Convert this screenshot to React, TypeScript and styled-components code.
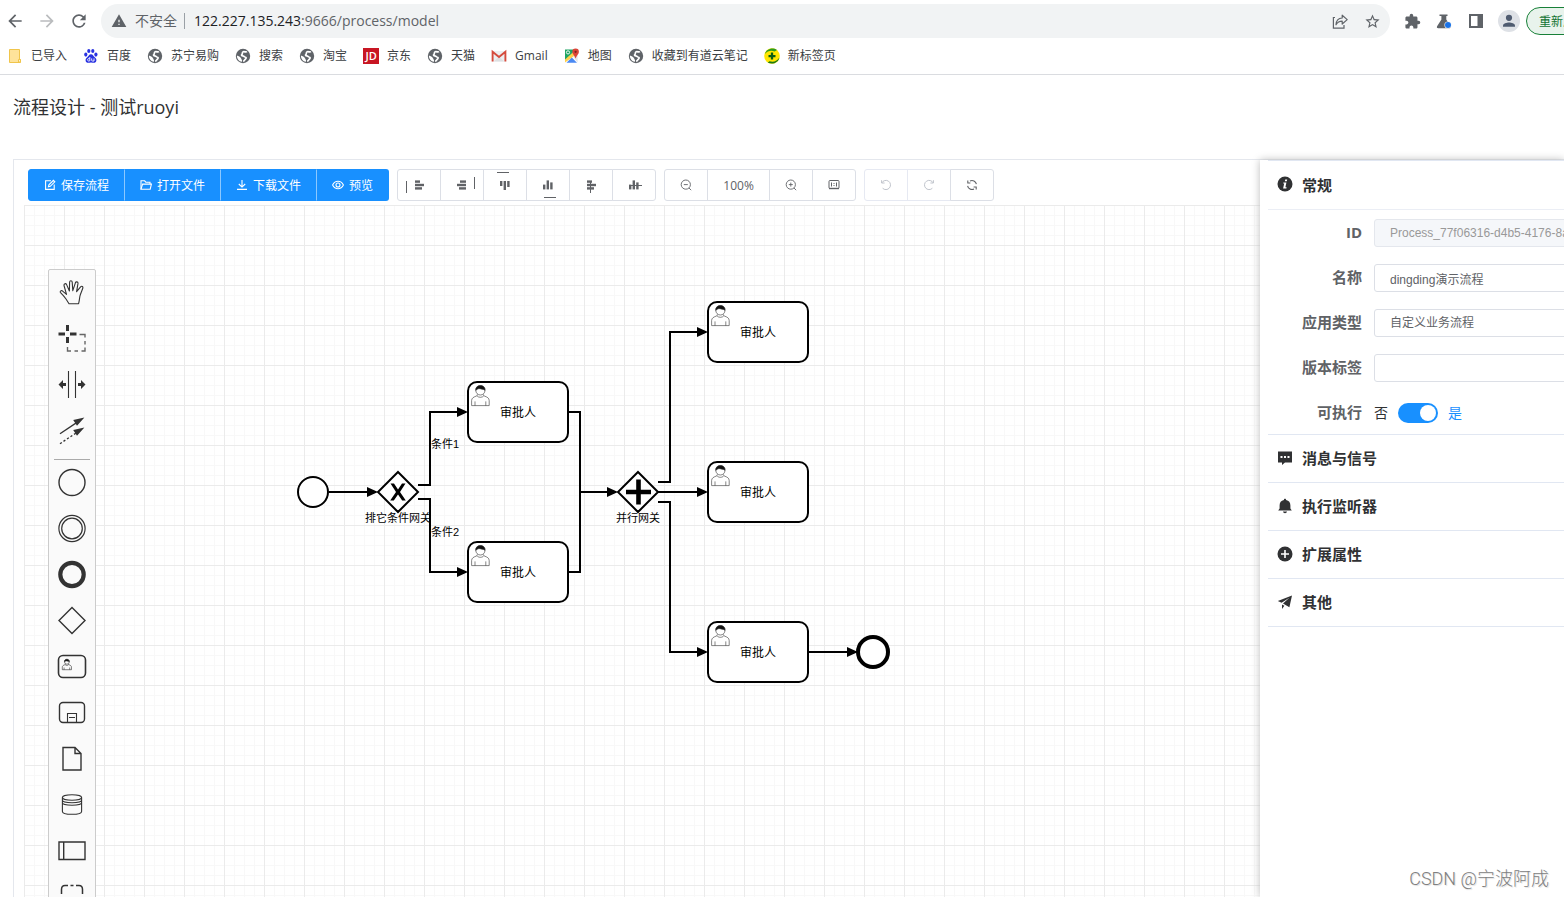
import React, { ReactNode, useState } from 'react';
import styled, { createGlobalStyle } from 'styled-components';
import {
  MdArrowBack,
  MdArrowForward,
  MdRefresh,
  MdWarning,
  MdStarBorder,
  MdExtension,
} from 'react-icons/md';

const uiFont = '"Open Sans", "Noto Sans CJK SC", sans-serif';
const formFont = '"Liberation Sans", "Noto Sans CJK SC", sans-serif';

const color = {
  primary: '#1890ff',
  border: '#dcdfe6',
  borderLight: '#e4e7ed',
  text: '#303133',
  regular: '#606266',
  chrome: '#5f6368',
};

const GlobalStyle = createGlobalStyle`
  * { box-sizing: border-box; }
  body { margin: 0; background: #fff; font-family: ${uiFont}; color: ${color.text}; }
  button, input, select { font-family: inherit; margin: 0; }
  svg { display: block; }
`;

const Page = styled.div`
  display: flex;
  flex-direction: column;
  height: 100vh;
  overflow: hidden;
  position: relative;
`;

/* ---------- browser bar ---------- */

const NavBar = styled.nav`
  display: flex;
  align-items: center;
  gap: 12px;
  height: 42px;
  padding-left: 5px;
  flex: none;
`;

const IconButton = styled.button<{ $faded?: boolean; $small?: boolean }>`
  display: grid;
  place-items: center;
  width: 20px;
  height: 20px;
  padding: 0;
  border: 0;
  background: none;
  color: ${(p) => (p.$faded ? '#babcbe' : color.chrome)};
  font-size: ${(p) => (p.$small ? 17 : 20)}px;
  flex: none;
`;

const AddressBar = styled.div`
  display: flex;
  align-items: center;
  flex: 1;
  min-width: 0;
  height: 34px;
  padding: 0 8px 0 10px;
  border-radius: 17px;
  background: #f1f3f4;
  color: ${color.chrome};
  font-size: 14px;
  line-height: 20px;
`;

const Insecure = styled.span`
  display: flex;
  align-items: center;
  gap: 8px;
  padding-right: 7px;
  border-right: 1px solid #9aa0a6;
  line-height: 16px;
  svg { font-size: 16px; }
`;

const Url = styled.span`
  flex: 1;
  padding-left: 9px;
  b { font-weight: 400; color: #202124; }
`;

const AddressActions = styled.div`
  display: flex;
  gap: 12px;
`;

const Extensions = styled.div`
  display: flex;
  align-items: center;
  gap: 12px;
`;

const Avatar = styled.button`
  width: 22px;
  height: 22px;
  padding: 0;
  border: 0;
  border-radius: 50%;
  background: #dee1e6;
`;

const UpdateSlot = styled.div`
  width: 38px;
  overflow: hidden;
  margin-left: -6px;
`;

const UpdateButton = styled.button`
  height: 28px;
  padding: 0 12px;
  border: 1px solid #188038;
  border-radius: 14px;
  background: #e8f3ec;
  color: #137333;
  font-size: 12px;
  white-space: nowrap;
`;

const Bookmarks = styled.nav`
  display: flex;
  align-items: center;
  gap: 16px;
  height: 33px;
  padding: 0 7px 4px;
  border-bottom: 1px solid #dadce0;
  flex: none;
`;

const Bookmark = styled.a`
  display: flex;
  align-items: center;
  gap: 8px;
  color: #3c4043;
  font-size: 12px;
  line-height: 18px;
  text-decoration: none;
  white-space: nowrap;
`;

const ShareIcon = () => (
  <svg width="20" height="20" viewBox="0 0 20 20" fill="none" stroke={color.chrome} strokeWidth="1.2">
    <path d="M5 6.5H3.4V17.2H14V14" />
    <path d="M6 13.8C6.2 9.6 8.4 7.2 12.2 7V4.2L17.2 8.6L12.2 13V10.2C9.2 10.2 7.4 11.4 6 13.8Z" strokeLinejoin="round" />
  </svg>
);

const FlaskIcon = () => (
  <svg width="20" height="20" viewBox="0 0 20 20">
    <path d="M5.5 3.5H13.5V5H12.3V8.5L16.6 15.2C17.2 16.3 16.6 17.2 15.6 17.2H4.2C3.1 17.2 2.5 16.2 3.1 15.2L7.4 8.5V5H5.5Z" fill={color.chrome} />
    <circle cx="14" cy="14" r="3.6" fill="#f1f3f4" />
    <circle cx="14" cy="14" r="3" fill="#1a73e8" />
  </svg>
);

const SidePanelIcon = () => (
  <svg width="20" height="20" viewBox="0 0 20 20">
    <path fillRule="evenodd" d="M3 3H17V17H3ZM5 5V15H11.5V5Z" fill={color.chrome} />
  </svg>
);

const PersonIcon = () => (
  <svg width="22" height="22" viewBox="0 0 22 22" fill="#4f5b70">
    <circle cx="11" cy="7.8" r="3.1" />
    <path d="M5 16.8V15.4C5 13.4 8.6 12.4 11 12.4S17 13.4 17 15.4V16.8Z" />
  </svg>
);

const FolderIcon = () => (
  <svg width="16" height="16" viewBox="0 0 16 16">
    <path d="M2.5 1.5H12.5V11.5H13.5V14.5H2.5Z" fill="#fee39a" stroke="#f0c54b" />
    <path d="M11.5 14V11.5H13.5V14Z" fill="#fff3cf" stroke="#f0c54b" />
  </svg>
);

const BaiduIcon = () => (
  <svg width="16" height="16" viewBox="0 0 16 16" fill="#2932e1">
    <ellipse cx="2.8" cy="6.6" rx="1.6" ry="2.1" />
    <ellipse cx="5.8" cy="3" rx="1.6" ry="2.1" />
    <ellipse cx="9.8" cy="3" rx="1.6" ry="2.1" />
    <ellipse cx="12.9" cy="6.6" rx="1.6" ry="2.1" />
    <path d="M8 6.2C10 6.2 10.5 8.3 12 9.4C14.4 11.2 13.6 14.8 10.8 14.8C9.8 14.8 9 14.4 8 14.4S6.2 14.8 5.2 14.8C2.4 14.8 1.6 11.2 4 9.4C5.5 8.3 6 6.2 8 6.2Z" />
    <path d="M6.8 9V13M6.6 10.6H5.4C4.4 10.6 4.4 13 5.4 13H6.6M8.7 10.4V12.4Q8.7 13 9.4 13H11V10.4" fill="none" stroke="#fff" strokeWidth="0.9" />
  </svg>
);

const GlobeIcon = () => (
  <svg width="16" height="16" viewBox="0 0 16 16">
    <circle cx="8" cy="8" r="7.2" fill={color.chrome} />
    <path
      d="M12 3.6C10.6 4.6 9.6 3.2 8.2 3.8C6.6 4.6 8 5.8 6.8 6.6C6.2 7 6.6 7.8 7.6 7.8C9 7.8 8.8 8.8 10 9C11.4 9.2 11.4 10.2 10.6 11C9.6 11.6 9.6 12.8 8.2 13.4"
      fill="none"
      stroke="#fff"
      strokeWidth="1.7"
    />
    <path d="M1.9 7.4C3.4 8.2 5.4 8.6 6 10.2C6.4 11.6 7.4 11.8 7 13.7C4 13.4 1.8 10.6 1.9 7.4Z" fill="#fff" />
  </svg>
);

const JdMark = styled.span`
  display: grid;
  place-items: center;
  width: 16px;
  height: 16px;
  background: #c81623;
  color: #fff;
  font-size: 11px;
  font-weight: 600;
  line-height: 16px;
`;

const GmailIcon = () => (
  <svg width="16" height="16" viewBox="0 0 16 16">
    <path d="M1 3H15V13.5H1Z" fill="#eceff1" />
    <path d="M3 13.5L8 8.5L13 13.5Z" fill="#dde0e2" />
    <path d="M1.6 13.5V3.8L8 9L14.4 3.8V13.5" fill="none" stroke="#d54b3d" strokeWidth="1.9" />
  </svg>
);

const MapsIcon = () => (
  <svg width="16" height="16" viewBox="0 0 16 16">
    <path d="M1 1.5H12L1 13Z" fill="#1fa463" />
    <path d="M1 14.5V11.5L11 2.5L13 6Z" fill="#ffd04c" />
    <path d="M2.5 14.8L7.8 9.6L13 14.8Z" fill="#4a89f3" />
    <path d="M9 8.6L13.6 6V14.5Z" fill="#e6e6e6" />
    <circle cx="4" cy="4.4" r="1.6" fill="none" stroke="#fff" strokeWidth="0.9" />
    <path d="M11.6 0.6A3.3 3.3 0 0 1 14.9 4C14.9 6 12.6 7.4 11.6 10.4C10.6 7.4 8.3 6 8.3 4A3.3 3.3 0 0 1 11.6 0.6Z" fill="#db4437" />
    <circle cx="11.6" cy="3.8" r="1.1" fill="#7b231b" />
  </svg>
);

const NewTabIcon = () => (
  <svg width="16" height="16" viewBox="0 0 16 16">
    <circle cx="8" cy="8" r="7.8" fill="#ffe600" />
    <path d="M1 6C2 1.6 8 -1.2 13 2L10.6 3.6C7.4 1.8 3.6 2.8 1 6Z" fill="#2c9a1e" />
    <path d="M15.4 9.4C14.6 14 9 17.4 3.6 14.4L5.6 13.2C9.6 14.6 13.4 12.8 15.4 9.4Z" fill="#1d7a14" />
    <path d="M8 4.6V11.6M4.5 8.1H11.5" stroke="#0b5c12" strokeWidth="2.3" />
  </svg>
);

const bookmarks: { label: string; icon: ReactNode }[] = [
  { label: '已导入', icon: <FolderIcon /> },
  { label: '百度', icon: <BaiduIcon /> },
  { label: '苏宁易购', icon: <GlobeIcon /> },
  { label: '搜索', icon: <GlobeIcon /> },
  { label: '淘宝', icon: <GlobeIcon /> },
  { label: '京东', icon: <JdMark aria-hidden="true">JD</JdMark> },
  { label: '天猫', icon: <GlobeIcon /> },
  { label: 'Gmail', icon: <GmailIcon /> },
  { label: '地图', icon: <MapsIcon /> },
  { label: '收藏到有道云笔记', icon: <GlobeIcon /> },
  { label: '新标签页', icon: <NewTabIcon /> },
];

/* ---------- page frame ---------- */

const Main = styled.main`
  display: flex;
  flex-direction: column;
  flex: 1;
  min-height: 0;
  padding-left: 13px;
`;

const Title = styled.h1`
  margin: 0;
  padding: 20px 0 40px;
  font-size: 18px;
  line-height: 24px;
  font-weight: 400;
  flex: none;
`;

const Designer = styled.div`
  display: flex;
  flex: 1;
  min-height: 0;
  border-top: 1px solid ${color.borderLight};
  border-left: 1px solid ${color.borderLight};
`;

const Workspace = styled.section`
  display: flex;
  flex-direction: column;
  flex: 1;
  min-width: 0;
`;

const Toolbar = styled.div`
  display: flex;
  gap: 8px;
  padding: 9px 14px 4px;
  flex: none;
`;

const ButtonGroup = styled.div`
  display: flex;
  button + button { margin-left: -1px; }
  button:not(:first-child) { border-top-left-radius: 0; border-bottom-left-radius: 0; }
  button:not(:last-child) { border-top-right-radius: 0; border-bottom-right-radius: 0; }
`;

const PrimaryButton = styled.button`
  display: flex;
  align-items: center;
  gap: 5px;
  height: 32px;
  padding: 0 15px;
  border: 1px solid ${color.primary};
  border-radius: 3px;
  background: ${color.primary};
  color: #fff;
  font-size: 12px;
  white-space: nowrap;
  & + & { border-left-color: rgba(255, 255, 255, 0.5); }
`;

const ToolButton = styled.button<{ $wide?: boolean }>`
  display: grid;
  place-items: center;
  width: ${(p) => (p.$wide ? 63 : 44)}px;
  height: 32px;
  padding: 0;
  border: 1px solid ${color.border};
  border-radius: 3px;
  background: #fff;
  color: ${color.regular};
  font-size: 12px;
  &:disabled { color: #c0c4cc; border-color: #e6e9f2; }
`;

const SaveIcon = () => (
  <svg width="12" height="12" viewBox="0 0 12 12" fill="none" stroke="currentColor" strokeWidth="1.1">
    <path d="M7 1.8H1.6V10.4H10.2V5.4" />
    <path d="M4.4 7.8L4.9 5.9L9.4 1.4L10.8 2.8L6.3 7.3Z" />
  </svg>
);
const OpenIcon = () => (
  <svg width="12" height="12" viewBox="0 0 12 12" fill="none" stroke="currentColor" strokeWidth="1.1">
    <path d="M1 10.2V1.8H4.6L5.8 3.2H10V5" />
    <path d="M1 10.2L2.6 5.1H11.4L10.2 10.2Z" />
  </svg>
);
const DownloadIcon = () => (
  <svg width="12" height="12" viewBox="0 0 12 12" fill="none" stroke="currentColor" strokeWidth="1.1">
    <path d="M6 1V8M2.8 5L6 8.1L9.2 5M1 10.4H11" />
  </svg>
);
const ViewIcon = () => (
  <svg width="12" height="12" viewBox="0 0 12 12" fill="none" stroke="currentColor" strokeWidth="1.1">
    <path d="M0.6 6C3 1 9 1 11.4 6C9 11 3 11 0.6 6Z" />
    <circle cx="6" cy="6" r="2" />
  </svg>
);

type Bar = [number, number, number, number];
const rowsLeft: Bar[] = [[17, 10.4, 5, 2.4], [17, 13.8, 9, 2.4], [17, 17.2, 7, 2.4]];
const rowsRight: Bar[] = [[19, 10.4, 6, 2.4], [16, 13.8, 9, 2.4], [18, 17.2, 7, 2.4]];
const colsTop: Bar[] = [[16, 11, 2.4, 5], [19.6, 11, 2.4, 9], [23.2, 11, 2.4, 6]];
const colsBottom: Bar[] = [[16, 14.6, 2.4, 4.8], [19.6, 10.4, 2.4, 9], [23.2, 12.4, 2.4, 7]];

const alignTools: { label: string; bars: Bar[]; line: Bar }[] = [
  { label: '向左对齐', bars: rowsLeft, line: [8, 11, 1, 12] },
  { label: '向右对齐', bars: rowsRight, line: [33, 7, 1, 12] },
  { label: '向上对齐', bars: colsTop, line: [13, 2, 12, 1] },
  { label: '向下对齐', bars: colsBottom, line: [17, 27, 12, 1] },
  { label: '水平居中', bars: rowsLeft, line: [20, 11, 1, 12] },
  { label: '垂直居中', bars: colsBottom, line: [17, 15, 12, 1] },
];

const AlignGlyph = ({ bars, line }: { bars: Bar[]; line: Bar }) => (
  <svg width="42" height="30" viewBox="0 0 42 30" fill="currentColor">
    {[...bars, line].map(([x, y, w, h], i) => (
      <rect key={i} x={x} y={y} width={w} height={h} />
    ))}
  </svg>
);

const ZoomGlyph = ({ plus }: { plus?: boolean }) => (
  <svg width="12" height="12" viewBox="0 0 12 12" fill="none" stroke="currentColor" strokeWidth="0.9">
    <circle cx="5.8" cy="5.6" r="4.6" />
    <path d="M9 9L11.2 11.2M3.8 5.6H7.8" />
    {plus && <path d="M5.8 3.6V7.6" />}
  </svg>
);

const FitGlyph = () => (
  <svg width="12" height="12" viewBox="0 0 12 12" fill="none" stroke="currentColor" strokeWidth="1">
    <rect x="1" y="1.5" width="10" height="8" rx="1" />
    <path d="M1 9.5H11" strokeWidth="1.4" />
    <path d="M3.5 3.5V7.5M8.5 3.5V7.5" />
    <path d="M6 4V5M6 6V7" />
  </svg>
);

const UndoGlyph = () => (
  <svg width="12" height="12" viewBox="0 0 12 12" fill="none" stroke="currentColor" strokeWidth="1">
    <path d="M1.6 1.2V4H4.6M1.8 3.9A4.6 4.6 0 1 1 2.6 9.2" />
  </svg>
);
const RedoGlyph = () => (
  <svg width="12" height="12" viewBox="0 0 12 12" fill="none" stroke="currentColor" strokeWidth="1">
    <path d="M10.4 1.2V4H7.4M10.2 3.9A4.6 4.6 0 1 0 9.4 9.2" />
  </svg>
);
const ResetGlyph = () => (
  <svg width="12" height="12" viewBox="0 0 12 12" fill="none" stroke="currentColor" strokeWidth="1.1">
    <path d="M1.8 1.4V4H4.4M4 2A4.5 4.5 0 0 1 10.4 5.2M10.2 10.6V8H7.6M8 10A4.5 4.5 0 0 1 1.6 6.8" />
  </svg>
);

/* ---------- canvas ---------- */

const Canvas = styled.div`
  position: relative;
  flex: 1;
  min-height: 0;
  margin-left: 10px;
  overflow: hidden;
  background-image:
    linear-gradient(to right, #ebebeb 1px, transparent 1px),
    linear-gradient(to bottom, #ebebeb 1px, transparent 1px),
    linear-gradient(to right, #f8f8f8 1px, transparent 1px),
    linear-gradient(to bottom, #f8f8f8 1px, transparent 1px);
  background-size: 40px 40px, 40px 40px, 10px 10px, 10px 10px;
`;

const Diagram = styled.svg`
  width: 100%;
  height: 100%;
  font-family: ${formFont};
`;

const Palette = styled.div`
  position: absolute;
  left: 24px;
  top: 64px;
  width: 48px;
  border: 1px solid #ccc;
  border-radius: 2px;
  background: #fafafa;
`;

const PaletteEntry = styled.button`
  display: grid;
  place-items: center;
  width: 46px;
  height: 46px;
  padding: 0;
  border: 0;
  background: none;
`;

const PaletteRule = styled.hr`
  margin: 0 5px;
  padding-top: 5px;
  border: 0;
  border-bottom: 1px solid #aaa;
`;

const UserGlyph = ({ line = 0.6 }: { line?: number }) => (
  <g fill="none" stroke="#333" strokeWidth={line}>
    <path d="M6.4 9.4C6.4 10.4 6 10.8 5.2 11.1C2.6 12.1 0.6 13 0.6 15.6V20.6H18.2V15.6C18.2 13 16.2 12.1 13.6 11.1C12.8 10.8 12.4 10.4 12.4 9.4" />
    <path d="M4 20.6V16.4M14.8 20.6V16.4M6 10.8C7.4 12.8 11.4 12.8 12.8 10.8" />
    <circle cx="9.4" cy="5.4" r="4.6" fill="#fff" />
    <path d="M4.8 5.4C4.4 2.4 6.6 0.5 9.4 0.5S14.4 2.4 14 5.4C13 3.9 11.6 4.7 9.8 3.9C8 3.4 6.2 3.6 4.8 5.4Z" fill="#111" />
  </g>
);

const paletteTools: { label: string; art: ReactNode }[] = [
  {
    label: '抓手工具',
    art: (
      <path
        d="M12 25.7L9 21C7 18 5 16 3.3 14.3C2.8 13 4.2 12.2 5.3 12.8L9.5 16.3L7 7.5C6.8 5.6 8.8 5 9.6 6.6L12.4 13L12.6 4C12.8 2.4 15 2.4 15.2 4L15.8 12.6L18.4 4.8C19 3.2 21.2 3.8 21 5.4L19.6 13.6L23.6 8.8C24.8 7.6 26.4 8.8 25.8 10.2L23.4 16.5C22.4 19 22.8 21 21.6 25.7Z"
        strokeWidth="1.1"
        strokeLinejoin="round"
      />
    ),
  },
  {
    label: '框选工具',
    art: (
      <>
        <path d="M1.5 10H8M13 10H19.5M10.5 1V7M10.5 13V19" strokeWidth="3" />
        <path d="M22.5 10.5H28V13.5M28 17V20.5M28 23.5V27H24.5M21 27H17.5M14 27H10.5V23" stroke="#666" strokeWidth="1.4" />
      </>
    ),
  },
  {
    label: '空间工具',
    art: (
      <>
        <path d="M11.5 1V28M18.5 1V28" strokeWidth="1.1" />
        <path d="M1.5 14.5L6 10V13H9V16H6V19ZM28.5 14.5L24 10V13H21V16H24V19Z" fill="#333" stroke="none" />
      </>
    ),
  },
  {
    label: '连线工具',
    art: (
      <>
        <path d="M3 17.7L20 6.4" strokeWidth="1.3" />
        <path d="M3 27.7L20 16.4" strokeWidth="1.3" strokeDasharray="2.2 2" />
        <path d="M27.4 1.6L20 9.8L16.2 3.9ZM27.4 11.6L20 19.8L16.2 13.9Z" fill="#333" stroke="none" />
      </>
    ),
  },
];

const paletteShapes: { label: string; art: ReactNode }[] = [
  { label: '开始事件', art: <circle cx="15" cy="14.5" r="13" /> },
  {
    label: '中间事件',
    art: (
      <>
        <circle cx="15" cy="14.5" r="13.1" strokeWidth="1.2" />
        <circle cx="15" cy="14.5" r="10.3" strokeWidth="1.2" />
      </>
    ),
  },
  { label: '结束事件', art: <circle cx="15" cy="14.5" r="11.7" strokeWidth="4.2" /> },
  { label: '网关', art: <path d="M15 1.6L28 14.5L15 27.4L2 14.5Z" /> },
  {
    label: '用户任务',
    art: (
      <>
        <rect x="1.5" y="3.5" width="27" height="22" rx="4.5" strokeWidth="1.6" />
        <g transform="translate(5 7) scale(0.52)"><UserGlyph line={1.2} /></g>
      </>
    ),
  },
  {
    label: '子流程',
    art: (
      <>
        <rect x="2.5" y="4.5" width="25" height="20" rx="3.5" strokeWidth="1.4" />
        <path d="M10.5 24.5V15.5H19.5V24.5M12 19.5H18" strokeWidth="1.1" />
      </>
    ),
  },
  { label: '数据对象', art: <path d="M6 3.5H18L24 9.5V26H6ZM18 3.5V9.5H24" /> },
  {
    label: '数据存储',
    art: (
      <>
        <ellipse cx="15" cy="7.5" rx="9.6" ry="2.7" strokeWidth="1.1" />
        <path d="M5.4 7.5V21.4C5.4 25.2 24.6 25.2 24.6 21.4V7.5M5.4 10C5.4 13.6 24.6 13.6 24.6 10M5.4 12.6C5.4 16.2 24.6 16.2 24.6 12.6" strokeWidth="1.1" />
      </>
    ),
  },
  { label: '泳池', art: <path d="M2 6H28V23.5H2ZM6.7 6V23.5" strokeWidth="1.4" /> },
  {
    label: '分组',
    art: <path d="M4.5 12V7.5C4.5 5 5.5 3.5 8 3.5H11M13.5 3.5H16.5M19 3.5H22C24.5 3.5 25.5 5 25.5 7.5V12M25.5 15V18M4.5 15V18" strokeWidth="1.5" />,
  },
];

const PaletteIcon = ({ children }: { children: ReactNode }) => (
  <svg width="30" height="30" viewBox="0 0 30 30" fill="none" stroke="#333" strokeWidth="1.4">
    {children}
  </svg>
);

const Task = ({ x, y }: { x: number; y: number }) => (
  <g transform={`translate(${x} ${y})`}>
    <rect width="100" height="60" rx="9" fill="#fff" stroke="#000" strokeWidth="2" />
    <g transform="translate(3 3)"><UserGlyph /></g>
    <text x="50" y="35" fontSize="12" textAnchor="middle">审批人</text>
  </g>
);

const Gateway = ({ x, y, name, children }: { x: number; y: number; name: string; children: ReactNode }) => (
  <g transform={`translate(${x} ${y})`}>
    <path d="M0 -20L20 0L0 20L-20 0Z" fill="#fff" stroke="#000" strokeWidth="2" />
    {children}
    <text y="30" fontSize="11" textAnchor="middle">{name}</text>
  </g>
);

const flows = [
  'M329 492H376',
  'M418 485H430V412H466',
  'M418 499H430V572H466',
  'M580 492H616',
  'M658 482H670V332H706',
  'M658 492H706',
  'M658 502H670V652H706',
  'M808 652H856',
];

const ProcessDiagram = () => (
  <Diagram role="img" aria-label="流程图">
    <defs>
      <marker id="flow-end" viewBox="0 0 11 10" refX="9" refY="5" markerWidth="11" markerHeight="10" markerUnits="userSpaceOnUse" orient="auto">
        <path d="M0 0L11 5L0 10Z" />
      </marker>
    </defs>
    <g transform="translate(-24 -205)">
      <g fill="none" stroke="#000" strokeWidth="2">
        {flows.map((d) => (
          <path key={d} d={d} markerEnd="url(#flow-end)" />
        ))}
        <path d="M568 412H580V572H568" />
      </g>
      <circle cx="313" cy="492" r="15" fill="#fff" stroke="#000" strokeWidth="2" />
      <circle cx="873" cy="652" r="15" fill="#fff" stroke="#000" strokeWidth="4" />
      <Gateway x={398} y={492} name="排它条件网关">
        <path d="M-7.5 -8.5H-4L0 -2.6L4 -8.5H7.5L2 0L7.8 8.5H4.2L0 2.6L-4.2 8.5H-7.8L-2 0Z" />
      </Gateway>
      <Gateway x={638} y={492} name="并行网关">
        <path d="M0.5 -12.5V12.5M-12 0H13" stroke="#000" strokeWidth="4.6" />
      </Gateway>
      <Task x={468} y={382} />
      <Task x={468} y={542} />
      <Task x={708} y={302} />
      <Task x={708} y={462} />
      <Task x={708} y={622} />
      <text x="431" y="448" fontSize="11">条件1</text>
      <text x="431" y="536" fontSize="11">条件2</text>
    </g>
  </Diagram>
);

/* ---------- properties panel ---------- */

const PropertyPanel = styled.aside`
  flex: 0 0 304px;
  padding-left: 8px;
  overflow: hidden;
  background: #fff;
  box-shadow: 0 0 8px #bbb;
  z-index: 1;
`;

const Section = styled.section`
  border-bottom: 1px solid #e1e7f2;
  &:first-child { border-top: 1px solid #e1e7f2; }
`;

const SectionHeader = styled.button<{ $open?: boolean }>`
  display: flex;
  align-items: center;
  gap: 9px;
  width: 100%;
  height: ${(p) => (p.$open ? 49 : 47)}px;
  padding: 0 9px 2px;
  border: 0;
  border-bottom: ${(p) => (p.$open ? '1px solid #ebeef5' : '0')};
  background: none;
  color: ${color.text};
  font-size: 15px;
  font-weight: 700;
  text-align: left;
`;

const Fields = styled.div`
  display: flex;
  flex-direction: column;
  gap: 17px;
  width: 480px;
  padding: 9px 0 7px;
`;

const Field = styled.div`
  display: flex;
  gap: 12px;
  height: 28px;
`;

const FieldLabel = styled.label`
  width: 94px;
  color: ${color.regular};
  font-size: 15px;
  line-height: 26px;
  font-weight: 700;
  text-align: right;
`;

const TextInput = styled.input`
  flex: 1;
  height: 28px;
  padding: 0 15px;
  border: 1px solid ${color.border};
  border-radius: 3px;
  background: #fff;
  color: ${color.regular};
  font-family: ${formFont};
  font-size: 12px;
  &:disabled { background: #f5f7fa; border-color: ${color.borderLight}; color: #999; }
`;

const SelectInput = styled.select`
  appearance: none;
  flex: 1;
  height: 28px;
  padding: 0 15px;
  border: 1px solid ${color.border};
  border-radius: 3px;
  background: #fff;
  color: ${color.regular};
  font-family: ${formFont};
  font-size: 12px;
`;

const SwitchRow = styled.div`
  display: flex;
  align-items: center;
  gap: 10px;
  font-size: 14px;
`;

const SwitchText = styled.span<{ $active?: boolean }>`
  color: ${(p) => (p.$active ? color.primary : color.text)};
  line-height: 20px;
`;

const Switch = styled.input`
  appearance: none;
  display: flex;
  align-items: center;
  width: 40px;
  height: 20px;
  padding: 0 2px;
  border-radius: 10px;
  background: #dcdfe6;
  &::before {
    content: '';
    width: 16px;
    height: 16px;
    border-radius: 50%;
    background: #fff;
  }
  &:checked { justify-content: flex-end; background: ${color.primary}; }
`;

const HeaderIcon = ({ children }: { children: ReactNode }) => (
  <svg width="16" height="16" viewBox="0 0 16 16" fill={color.text}>{children}</svg>
);

const InfoIcon = () => (
  <HeaderIcon>
    <circle cx="8" cy="8" r="7.5" />
    <path d="M8.2 3.4H10.2L9.8 5.3H7.8ZM6.4 6.4H9.4L8.4 11.2H9.6L9.4 12.4H6.1L7.2 7.5H6.2Z" fill="#fff" />
  </HeaderIcon>
);
const MessageIcon = () => (
  <HeaderIcon>
    <path d="M1 1.6H15V12.4H8L5 15V12.4H1Z" />
    <path d="M3.5 6H5.5V8H3.5ZM7 6H9V8H7ZM10.5 6H12.5V8H10.5Z" fill="#fff" />
  </HeaderIcon>
);
const BellIcon = () => (
  <HeaderIcon>
    <path d="M8 0.8C8.7 0.8 9.1 1.3 9.1 2C12 2.5 13.4 4.6 13.4 7.5V10.6L14.8 12.4H1.2L2.6 10.6V7.5C2.6 4.6 4 2.5 6.9 2C6.9 1.3 7.3 0.8 8 0.8ZM6 13.6H10C9.8 14.6 9 15.2 8 15.2S6.2 14.6 6 13.6Z" />
  </HeaderIcon>
);
const PlusIcon = () => (
  <HeaderIcon>
    <circle cx="8" cy="8" r="7.5" />
    <path d="M8 4V12M4 8H12" stroke="#fff" strokeWidth="1.6" />
  </HeaderIcon>
);
const SendIcon = () => (
  <HeaderIcon>
    <path d="M15 1.6L0.8 7L4.6 8.8L12.4 3.8L6 9.6L12.4 13.2ZM5 10.6V15L7.4 11.8Z" />
  </HeaderIcon>
);

const closedSections = [
  { label: '消息与信号', icon: <MessageIcon /> },
  { label: '执行监听器', icon: <BellIcon /> },
  { label: '扩展属性', icon: <PlusIcon /> },
  { label: '其他', icon: <SendIcon /> },
];

const Watermark = styled.div`
  position: absolute;
  right: 15px;
  bottom: 6px;
  z-index: 2;
  color: #808080;
  font-family: Roboto, "Noto Sans CJK SC", sans-serif;
  font-size: 18px;
  line-height: 24px;
  font-weight: 300;
  text-shadow: 1px 1px 1px #ddd;
`;

export default function App() {
  const [name, setName] = useState('dingding演示流程');
  const [tag, setTag] = useState('');
  const [executable, setExecutable] = useState(true);

  return (
    <Page>
      <GlobalStyle />
      <NavBar aria-label="浏览器">
        <IconButton aria-label="后退"><MdArrowBack /></IconButton>
        <IconButton aria-label="前进" $faded><MdArrowForward /></IconButton>
        <IconButton aria-label="刷新"><MdRefresh /></IconButton>
        <AddressBar>
          <Insecure><MdWarning />不安全</Insecure>
          <Url><b>122.227.135.243</b>:9666/process/model</Url>
          <AddressActions>
            <IconButton aria-label="分享"><ShareIcon /></IconButton>
            <IconButton aria-label="收藏" $small><MdStarBorder /></IconButton>
          </AddressActions>
        </AddressBar>
        <Extensions>
          <IconButton aria-label="扩展程序" $small><MdExtension /></IconButton>
          <IconButton aria-label="实验"><FlaskIcon /></IconButton>
          <IconButton aria-label="侧边栏"><SidePanelIcon /></IconButton>
          <Avatar aria-label="用户"><PersonIcon /></Avatar>
        </Extensions>
        <UpdateSlot><UpdateButton>重新启动即可更新</UpdateButton></UpdateSlot>
      </NavBar>
      <Bookmarks aria-label="书签">
        {bookmarks.map((b) => (
          <Bookmark key={b.label} href="#">{b.icon}{b.label}</Bookmark>
        ))}
      </Bookmarks>

      <Main>
        <Title>流程设计 - 测试ruoyi</Title>
        <Designer>
          <Workspace>
            <Toolbar>
              <ButtonGroup>
                <PrimaryButton><SaveIcon />保存流程</PrimaryButton>
                <PrimaryButton><OpenIcon />打开文件</PrimaryButton>
                <PrimaryButton><DownloadIcon />下载文件</PrimaryButton>
                <PrimaryButton><ViewIcon />预览</PrimaryButton>
              </ButtonGroup>
              <ButtonGroup>
                {alignTools.map((t) => (
                  <ToolButton key={t.label} aria-label={t.label}>
                    <AlignGlyph bars={t.bars} line={t.line} />
                  </ToolButton>
                ))}
              </ButtonGroup>
              <ButtonGroup>
                <ToolButton aria-label="缩小"><ZoomGlyph /></ToolButton>
                <ToolButton $wide>100%</ToolButton>
                <ToolButton aria-label="放大"><ZoomGlyph plus /></ToolButton>
                <ToolButton aria-label="适应画布"><FitGlyph /></ToolButton>
              </ButtonGroup>
              <ButtonGroup>
                <ToolButton aria-label="撤销" disabled><UndoGlyph /></ToolButton>
                <ToolButton aria-label="恢复" disabled><RedoGlyph /></ToolButton>
                <ToolButton aria-label="重新绘制"><ResetGlyph /></ToolButton>
              </ButtonGroup>
            </Toolbar>
            <Canvas>
              <ProcessDiagram />
              <Palette>
                {paletteTools.map((t) => (
                  <PaletteEntry key={t.label} aria-label={t.label}><PaletteIcon>{t.art}</PaletteIcon></PaletteEntry>
                ))}
                <PaletteRule />
                {paletteShapes.map((t) => (
                  <PaletteEntry key={t.label} aria-label={t.label}><PaletteIcon>{t.art}</PaletteIcon></PaletteEntry>
                ))}
              </Palette>
            </Canvas>
          </Workspace>

          <PropertyPanel>
            <Section>
              <SectionHeader $open aria-expanded="true"><InfoIcon />常规</SectionHeader>
              <Fields>
                <Field>
                  <FieldLabel htmlFor="process-id">ID</FieldLabel>
                  <TextInput id="process-id" disabled defaultValue="Process_77f06316-d4b5-4176-8a" />
                </Field>
                <Field>
                  <FieldLabel htmlFor="process-name">名称</FieldLabel>
                  <TextInput id="process-name" value={name} onChange={(e) => setName(e.target.value)} />
                </Field>
                <Field>
                  <FieldLabel htmlFor="process-type">应用类型</FieldLabel>
                  <SelectInput id="process-type"><option>自定义业务流程</option></SelectInput>
                </Field>
                <Field>
                  <FieldLabel htmlFor="process-tag">版本标签</FieldLabel>
                  <TextInput id="process-tag" value={tag} onChange={(e) => setTag(e.target.value)} />
                </Field>
                <Field>
                  <FieldLabel htmlFor="process-exec">可执行</FieldLabel>
                  <SwitchRow>
                    <SwitchText $active={!executable}>否</SwitchText>
                    <Switch id="process-exec" type="checkbox" checked={executable} onChange={(e) => setExecutable(e.target.checked)} />
                    <SwitchText $active={executable}>是</SwitchText>
                  </SwitchRow>
                </Field>
              </Fields>
            </Section>
            {closedSections.map((s) => (
              <Section key={s.label}>
                <SectionHeader aria-expanded="false">{s.icon}{s.label}</SectionHeader>
              </Section>
            ))}
          </PropertyPanel>
        </Designer>
      </Main>
      <Watermark>CSDN @宁波阿成</Watermark>
    </Page>
  );
}
